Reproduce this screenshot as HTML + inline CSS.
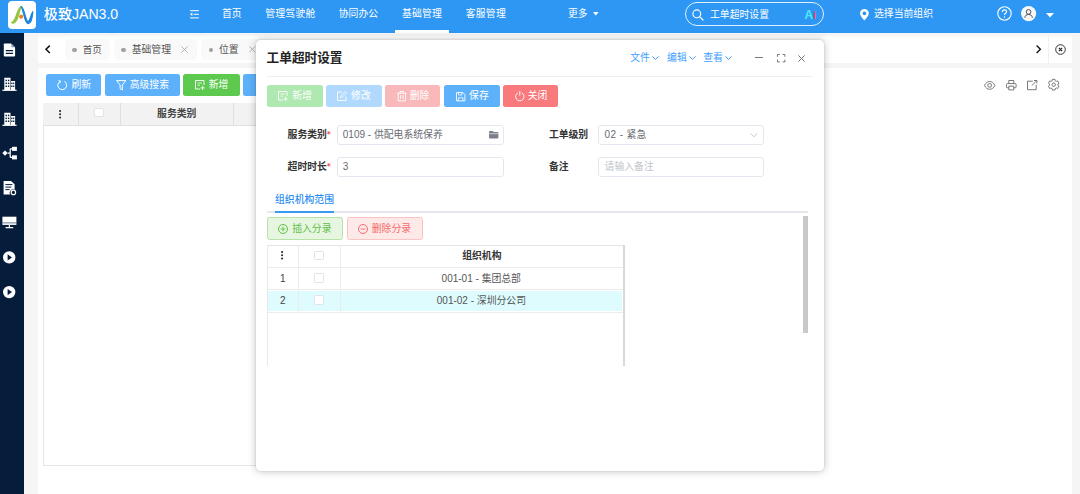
<!DOCTYPE html>
<html lang="zh-CN">
<head>
<meta charset="utf-8">
<title>极致JAN3.0 - 工单超时设置</title>
<style>
html,body{margin:0;padding:0;}
body{width:1080px;height:494px;overflow:hidden;position:relative;background:#f5f5f5;
 font-family:"Liberation Sans","Noto Sans CJK SC",sans-serif;font-size:9.84px;color:#303133;}
.a{position:absolute;}
.t{position:absolute;white-space:nowrap;line-height:14px;height:14px;margin-top:-7px;}
.b{font-weight:bold;}
svg{position:absolute;overflow:visible;}
/* header */
#hdr{left:0;top:0;width:1080px;height:32.6px;background:#2e97f4;}
#hdr .t{color:#fff;}
#side{left:0;top:32.6px;width:24.4px;height:462px;background:#051d3a;}
#tabs{left:37.6px;top:36px;width:1034.6px;height:27px;background:#fff;}
#main{left:37.6px;top:68px;width:1034.6px;height:426px;background:#fff;}
.chip{position:absolute;top:39.4px;height:20.8px;background:#f9f9f9;border-radius:5px;}
.dot{position:absolute;width:4.400px;height:4.400px;border-radius:50%;background:#a0a0a0;top:47.500px;}
.btn{position:absolute;height:22px;border-radius:2.5px;color:#fff;}
.btn .t{color:#fff;top:11px;}
.btn svg{top:5.5px;}
/* modal */
#modal{left:255.5px;top:39.5px;width:568.5px;height:431.5px;background:#fff;border-radius:4.5px;
 box-shadow:0 0 8px rgba(0,0,0,.26),0 0 1.500px rgba(0,0,0,.18);}
.inp{position:absolute;height:17.7px;border:1px solid #e3e7ef;border-radius:3px;background:#fff;}
.cb{position:absolute;width:7.9px;height:7.9px;border:0.8px solid #e0e3e8;border-radius:1.5px;background:#fff;}
</style>
</head>
<body>
<!-- HEADER -->
<div id="hdr" class="a">
  <div class="a" style="left:8.3px;top:.9px;width:28px;height:27.9px;background:#fff;border-radius:4px;"></div>
  <svg style="left:8.3px;top:0.9px" width="28" height="28" viewBox="0 0 28 28">
    <path d="M2.9 21.3C7.6 20.6 8.2 8.2 12.6 5.1L13.9 5.9C10.9 10.5 11.2 21.4 5.2 22.7C4.2 22.9 3.3 22.3 2.9 21.3Z" fill="#8fc63d"/>
    <path d="M13.2 5.5C16.8 7 17.4 20.6 20.2 20.4C22.2 20.1 22.4 14 24.9 10.6C24.6 14.6 23.2 22.4 20.3 22.6C16.4 22.8 15.8 10.4 13.2 5.5Z" fill="#1b83e0" stroke="#1b83e0" stroke-width="1.100" stroke-linejoin="round"/>
    <circle cx="13.1" cy="15.7" r="2.1" fill="#f5821f"/>
  </svg>
  <div class="t b" style="left:43.8px;top:14.2px;font-size:14.1px;line-height:18px;height:18px;margin-top:-9px;font-weight:500;">极致JAN3.0</div>
  <svg style="left:190px;top:9.6px" width="9" height="8.6" viewBox="0 0 9 8.6"><path d="M0 .7H8.800M3.600 4.300H8.800M0 7.900H8.800" stroke="#fff" stroke-width="1" fill="none"/><path d="M0 4.300L2.400 2.600V6Z" fill="#fff"/></svg>
  <div class="t" style="left:221.9px;top:13.8px;">首页</div>
  <div class="t" style="left:265.3px;top:13.8px;letter-spacing:.2px">管理驾驶舱</div>
  <div class="t" style="left:338.8px;top:13.8px;">协同办公</div>
  <div class="t" style="left:402px;top:13.8px;letter-spacing:.2px">基础管理</div>
  <div class="a" style="left:395.3px;top:30.1px;width:53.5px;height:2.5px;background:#fff;"></div>
  <div class="t" style="left:465.8px;top:13.8px;letter-spacing:.2px">客服管理</div>
  <div class="t" style="left:568px;top:13.8px;">更多</div>
  <svg style="left:592.6px;top:12.100px" width="5.6" height="3.4" viewBox="0 0 5.6 3.4"><path d="M0 0H5.6L2.8 3.4Z" fill="#fff"/></svg>
  <!-- search pill -->
  <div class="a" style="left:685px;top:2.300px;width:136.5px;height:21.500px;border:1px solid #e3f1fe;border-radius:12px;"></div>
  <svg style="left:692px;top:8.6px" width="11.5" height="11.5" viewBox="0 0 11.5 11.5"><circle cx="4.8" cy="4.8" r="3.9" fill="none" stroke="#fff" stroke-width="1.1"/><path d="M7.6 7.6L11 11" stroke="#fff" stroke-width="1.2" stroke-linecap="round"/></svg>
  <div class="t" style="left:710px;top:14.6px;">工单超时设置</div>
  <div class="t b" style="left:804.4px;top:15px;font-size:12px;color:#45ecff;">A<span style="color:#e8475d;font-size:11px">i</span></div>
  <!-- location -->
  <svg style="left:860px;top:8.8px" width="8.8" height="11.4" viewBox="0 0 8.8 11.4"><path d="M4.4 0C2 0 0 1.9 0 4.3C0 7.2 4.4 11.4 4.4 11.4C4.4 11.4 8.8 7.2 8.8 4.3C8.8 1.9 6.8 0 4.4 0ZM4.4 6.2A1.9 1.9 0 1 1 4.4 2.4A1.9 1.9 0 0 1 4.4 6.2Z" fill="#fff"/></svg>
  <div class="t" style="left:874px;top:13.8px;">选择当前组织</div>
  <!-- help -->
  <svg style="left:997px;top:6px" width="15" height="15" viewBox="0 0 15 15"><circle cx="7.5" cy="7.5" r="6.7" fill="none" stroke="#fff" stroke-width="1.1"/><path d="M5.4 5.9C5.4 4.6 6.3 3.9 7.5 3.9C8.7 3.9 9.6 4.7 9.6 5.8C9.6 7.3 7.5 7.3 7.5 9" fill="none" stroke="#fff" stroke-width="1.1"/><circle cx="7.5" cy="10.9" r=".75" fill="#fff"/></svg>
  <!-- user -->
  <svg style="left:1021px;top:6.400px" width="15.2" height="15.2" viewBox="0 0 15.2 15.2"><circle cx="7.6" cy="7.6" r="7.6" fill="#f7f7f7"/><circle cx="7.6" cy="5.9" r="2.3" fill="none" stroke="#505050" stroke-width="1"/><path d="M3.9 11.8C3.9 9.6 5.4 8.5 7.6 8.5C9.8 8.5 11.3 9.6 11.3 11.8" fill="none" stroke="#505050" stroke-width="1"/></svg>
  <svg style="left:1046px;top:12.5px" width="8" height="4.6" viewBox="0 0 8 4.6"><path d="M0 0H8L4 4.6Z" fill="#fff"/></svg>
</div>

<!-- SIDEBAR -->
<div id="side" class="a"></div>
<svg id="sideicons" style="left:0;top:0" width="25" height="494" viewBox="0 0 25 494" fill="#fff">
  <!-- file -->
  <path d="M4.6 43.5H11L15.1 47.4V55.6A.8 .8 0 0 1 14.300 56.400H4.600A.8 .8 0 0 1 3.800 55.600V44.300A.8 .8 0 0 1 4.600 43.500Z"/>
  <path d="M11.300 43.500V47.200H15.100Z" fill="#8fa3ba"/>
  <path d="M5.800 50.700H13.100M5.800 53.300H13.100" stroke="#051d3a" stroke-width="1.200"/>
  <!-- building -->
  <g><path d="M4.300 77.800H10.500V80.900H15.100V90H4.300Z"/><path d="M2.400 90.300H16.600" stroke="#fff" stroke-width="1.200"/>
  <g fill="#051d3a"><rect x="5.500" y="79.700" width="1.400" height="1.500"/><rect x="7.900" y="79.700" width="1.400" height="1.500"/><rect x="5.500" y="82.600" width="1.400" height="1.500"/><rect x="7.900" y="82.600" width="1.400" height="1.500"/><rect x="5.500" y="85.500" width="1.400" height="1.500"/><rect x="7.900" y="85.500" width="1.400" height="1.500"/><rect x="11.200" y="82.600" width="1.300" height="1.500"/><rect x="13.100" y="82.600" width="1.200" height="1.500"/><rect x="11.200" y="85.500" width="1.300" height="1.500"/><rect x="13.100" y="85.500" width="1.200" height="1.500"/><rect x="10.300" y="80.900" width=".5" height="9"/></g></g>
  <g transform="translate(0,35)"><path d="M4.300 77.800H10.500V80.900H15.100V90H4.300Z"/><path d="M2.400 90.300H16.600" stroke="#fff" stroke-width="1.200"/>
  <g fill="#051d3a"><rect x="5.500" y="79.700" width="1.400" height="1.500"/><rect x="7.900" y="79.700" width="1.400" height="1.500"/><rect x="5.500" y="82.600" width="1.400" height="1.500"/><rect x="7.900" y="82.600" width="1.400" height="1.500"/><rect x="5.500" y="85.500" width="1.400" height="1.500"/><rect x="7.900" y="85.500" width="1.400" height="1.500"/><rect x="11.200" y="82.600" width="1.300" height="1.500"/><rect x="13.100" y="82.600" width="1.200" height="1.500"/><rect x="11.200" y="85.500" width="1.300" height="1.500"/><rect x="13.100" y="85.500" width="1.200" height="1.500"/><rect x="10.300" y="80.900" width=".5" height="9"/></g></g>
  <!-- org -->
  <path d="M2.300 153.100L5 150.400L7.700 153.100L5 155.800Z"/>
  <path d="M7.600 153.100H10.200M10.200 148.800V157.400M10.200 148.800H12.400M10.200 157.400H12.400" stroke="#fff" stroke-width="1.200" fill="none"/>
  <rect x="12" y="146.800" width="4.900" height="4.100"/><rect x="12" y="155.300" width="4.900" height="4.100"/>
  <!-- doc with gear -->
  <path d="M3.600 180.900H11L14.600 184.200V189.600A3.400 3.400 0 0 0 10.300 194.600H3.600Z"/>
  <path d="M5.400 184.600H12.400M5.400 187.100H11.400M5.400 189.600H9.600" stroke="#051d3a" stroke-width="1" />
  <circle cx="13.400" cy="192.400" r="2.200" fill="none" stroke="#fff" stroke-width="1.200"/>
  <!-- monitor -->
  <rect x="2.400" y="216.700" width="14" height="8.200"/>
  <path d="M9.400 224.900V227.400M5.600 227.700H13.200" stroke="#fff" stroke-width="1.200"/>
  <path d="M2.400 222.900H16.400" stroke="#051d3a" stroke-width=".6"/>
  <!-- play -->
  <circle cx="9.200" cy="257.400" r="6.200"/><path d="M7.600 254.300L12 257.400L7.600 260.500Z" fill="#051d3a"/>
  <circle cx="9.200" cy="292.100" r="6.200"/><path d="M7.600 289L12 292.100L7.600 295.200Z" fill="#051d3a"/>
</svg>

<!-- TAB BAR -->
<div id="tabs" class="a"></div>
<svg style="left:44.8px;top:45.4px" width="5.4" height="8.6" viewBox="0 0 5.4 8.6"><path d="M4.8 .6L1 4.3L4.8 8" fill="none" stroke="#111" stroke-width="1.5"/></svg>
<div class="chip" style="left:64.5px;width:45.5px;"></div>
<div class="dot" style="left:72.300px;"></div>
<div class="t" style="left:82.8px;top:49.8px;color:#555;font-size:9.5px">首页</div>
<div class="chip" style="left:113.7px;width:83.8px;"></div>
<div class="dot" style="left:121.300px;"></div>
<div class="t" style="left:131.7px;top:49.8px;color:#555;">基础管理</div>
<svg style="left:181.2px;top:46.3px" width="7" height="7" viewBox="0 0 7 7"><path d="M.4 .4L6.6 6.6M6.6 .4L.4 6.6" stroke="#aaa" stroke-width=".9"/></svg>
<div class="chip" style="left:201.3px;width:70px;"></div>
<div class="dot" style="left:208.800px;"></div>
<div class="t" style="left:219px;top:49.8px;color:#555;">位置</div>
<svg style="left:249px;top:46.400px" width="6.600" height="6.600" viewBox="0 0 7 7"><path d="M.4 .4L6.6 6.6M6.6 .4L.4 6.6" stroke="#aaa" stroke-width=".9"/></svg>
<svg style="left:1035.600px;top:45.200px" width="5.400" height="8.600" viewBox="0 0 5.400 8.600"><path d="M.6 .6L4.400 4.300L.6 8" fill="none" stroke="#111" stroke-width="1.350"/></svg>
<div class="a" style="left:1047.8px;top:35px;width:.8px;height:27.7px;background:#f0f0f0"></div>
<svg style="left:1055px;top:44px" width="11" height="11" viewBox="0 0 11 11"><circle cx="5.500" cy="5.500" r="4.800" fill="none" stroke="#333" stroke-width="1"/><path d="M3.900 3.900L7.100 7.100M7.100 3.900L3.900 7.100" stroke="#222" stroke-width="1.200"/></svg>

<!-- MAIN -->
<div id="main" class="a"></div>
<div class="btn" style="left:45.9px;top:74px;width:55.5px;background:#5db1fb;">
  <svg style="left:11.600px;top:5.800px" width="10.400" height="10.400" viewBox="0 0 10.400 10.400"><path d="M3.300 1.300A4.400 4.400 0 1 0 7.400 1.400" fill="none" stroke="#fff" stroke-width="1"/><path d="M1.500 .5L3.700 1.200L2.600 3.200" fill="none" stroke="#fff" stroke-width=".9"/></svg>
  <div class="t" style="left:25.6px;">刷新</div>
</div>
<div class="btn" style="left:104.9px;top:74px;width:75.3px;background:#5db1fb;">
  <svg style="left:11.400px;top:5.800px" width="10.400" height="10.600" viewBox="0 0 10.400 10.600"><path d="M.6 .6H9.800L6.300 5V10L4.100 8.600V5Z" fill="none" stroke="#fff" stroke-width="1" stroke-linejoin="round"/></svg>
  <div class="t" style="left:24.8px;">高级搜索</div>
</div>
<div class="btn" style="left:183.2px;top:74px;width:56.4px;background:#5dc94f;">
  <svg style="left:11.4px;top:6.2px" width="10" height="10" viewBox="0 0 10 10"><path d="M5 9H.5V.5H9V5" fill="none" stroke="#fff" stroke-width=".9"/><path d="M2.4 3H7M2.4 5.2H5" stroke="#fff" stroke-width=".8"/><path d="M7.6 5.8V10M5.5 7.9H9.7" stroke="#fff" stroke-width=".9"/></svg>
  <div class="t" style="left:25.6px;">新增</div>
</div>
<div class="btn" style="left:242.9px;top:74px;width:56px;background:#5db1fb;"></div>
<!-- right icons -->
<svg style="left:984.200px;top:80.500px" width="11.400" height="8.800" viewBox="0 0 11.400 8.800"><path d="M.5 4.400C1.700 1.800 3.600 .5 5.700 .5C7.800 .5 9.700 1.800 10.900 4.400C9.700 7 7.800 8.300 5.700 8.300C3.600 8.300 1.700 7 .5 4.400Z" fill="none" stroke="#6a6a6a" stroke-width=".9"/><circle cx="5.700" cy="4.400" r="1.900" fill="none" stroke="#6a6a6a" stroke-width=".9"/></svg>
<svg style="left:1005.700px;top:79.700px" width="10.600" height="10.400" viewBox="0 0 10.600 10.400"><path d="M2.800 3.600V.5H7.800V3.600M2.800 7.800H1.300C.8 7.800 .5 7.500 .5 7V4.400C.5 3.900 .8 3.600 1.300 3.600H9.300C9.800 3.600 10.100 3.900 10.100 4.400V7C10.100 7.500 9.800 7.800 9.300 7.800H7.800M2.800 6.200H7.800V9.900H2.800Z" fill="none" stroke="#6a6a6a" stroke-width=".9"/></svg>
<svg style="left:1027.200px;top:79.800px" width="10.400" height="10.200" viewBox="0 0 10.400 10.200"><path d="M5.800 1.200H.5V9.700H9.200V4.800" fill="none" stroke="#6a6a6a" stroke-width=".9"/><path d="M4.800 5.600L9.600 .8M7 .5H9.900V3.400" fill="none" stroke="#6a6a6a" stroke-width=".9"/></svg>
<svg style="left:1047.600px;top:79.100px" width="11.400" height="11.400" viewBox="0 0 11.400 11.400"><path d="M4.23 1.66L4.37 0.36L7.03 0.36L7.17 1.66L8.46 2.41L9.66 1.88L10.99 4.18L9.93 4.95L9.93 6.45L10.99 7.22L9.66 9.52L8.46 8.99L7.17 9.74L7.03 11.04L4.37 11.04L4.23 9.74L2.94 8.99L1.74 9.52L0.41 7.22L1.47 6.45L1.47 4.95L0.41 4.18L1.74 1.88L2.94 2.41Z" fill="none" stroke="#6a6a6a" stroke-width=".9" stroke-linejoin="round"/><circle cx="5.700" cy="5.700" r="1.700" fill="none" stroke="#6a6a6a" stroke-width=".9"/></svg>

<!-- grid -->
<div class="a" style="left:43.2px;top:103.2px;width:560px;height:362.600px;border:.8px solid #e6e6e6;box-sizing:border-box;background:#fff;"></div>
<div class="a" style="left:43.2px;top:103.2px;width:560px;height:22.400px;background:#f2f2f2;border-bottom:.8px solid #e2e2e2;box-sizing:border-box"></div>
<div class="a" style="left:78px;top:103.2px;width:.8px;height:22px;background:#e0e0e0"></div>
<div class="a" style="left:120.3px;top:103.2px;width:.8px;height:22px;background:#e0e0e0"></div>
<div class="a" style="left:232.7px;top:103.2px;width:.8px;height:22px;background:#e0e0e0"></div>
<svg style="left:59px;top:109.600px" width="2.200" height="8.600" viewBox="0 0 2.200 8.600" fill="#2a2a2a"><circle cx="1.100" cy="1.100" r="1.050"/><circle cx="1.100" cy="4.300" r="1.050"/><circle cx="1.100" cy="7.500" r="1.050"/></svg>
<div class="cb" style="left:94.200px;top:107.800px;width:7.600px;height:7.600px;border-radius:2px"></div>
<div class="t b" style="left:157.1px;top:114px;color:#444;">服务类别</div>

<!-- MODAL -->
<div id="modal" class="a"></div>
<div class="t b" style="left:266.6px;top:57.8px;font-size:12.66px;color:#222;line-height:18px;height:18px;margin-top:-9px">工单超时设置</div>
<div class="t" style="left:630.2px;top:57.8px;color:#409eff;">文件</div>
<svg style="left:652.1999999999999px;top:56.100px" width="7" height="4" viewBox="0 0 7 4"><path d="M.4 .4L3.500 3.400L6.600 .4" fill="none" stroke="#409eff" stroke-width="1"/></svg>
<div class="t" style="left:667.1px;top:57.8px;color:#409eff;">编辑</div>
<svg style="left:688.6px;top:56.100px" width="7" height="4" viewBox="0 0 7 4"><path d="M.4 .4L3.500 3.400L6.600 .4" fill="none" stroke="#409eff" stroke-width="1"/></svg>
<div class="t" style="left:703.3px;top:57.8px;color:#409eff;">查看</div>
<svg style="left:725.1999999999999px;top:56.100px" width="7" height="4" viewBox="0 0 7 4"><path d="M.4 .4L3.500 3.400L6.600 .4" fill="none" stroke="#409eff" stroke-width="1"/></svg>
<div class="a" style="left:755.3px;top:57.3px;width:8px;height:.9px;background:#777"></div>
<svg style="left:776.600px;top:53.500px" width="8.400" height="8.400" viewBox="0 0 8.400 8.400"><path d="M.5 2.800V.5H2.800M5.600 .5H7.900V2.800M7.900 5.600V7.900H5.600M2.800 7.900H.5V5.600" fill="none" stroke="#666" stroke-width=".9"/></svg>
<svg style="left:798px;top:54.700px" width="7" height="7" viewBox="0 0 7 7"><path d="M.4 .4L6.600 6.600M6.600 .4L.4 6.600" stroke="#666" stroke-width=".9"/></svg>
<div class="a" style="left:266.600px;top:75.700px;width:545.600px;height:.8px;background:#efefef"></div>

<!-- modal toolbar -->
<div class="btn" style="left:266.800px;top:85.300px;width:56.200px;background:#afe8b0;">
  <svg style="left:11.200px;top:6.200px" width="10" height="10" viewBox="0 0 10 10"><path d="M5 9H.5V.5H9V5" fill="none" stroke="#fff" stroke-width=".9"/><path d="M2.400 3H7M2.400 5.200H5" stroke="#fff" stroke-width=".8"/><path d="M7.600 5.800V10M5.500 7.900H9.700" stroke="#fff" stroke-width=".9"/></svg>
  <div class="t" style="left:25.400px;">新增</div>
</div>
<div class="btn" style="left:325.500px;top:85.300px;width:56px;background:#b1d9fd;">
  <svg style="left:11.600px;top:6.200px" width="10" height="10" viewBox="0 0 10 10"><path d="M9 5.500V9.500H.5V1H5" fill="none" stroke="#fff" stroke-width=".9"/><path d="M3.400 6.800L4 4.800L8.300 .5L9.600 1.800L5.300 6.100Z" fill="none" stroke="#fff" stroke-width=".8" stroke-linejoin="round"/></svg>
  <div class="t" style="left:25.600px;">修改</div>
</div>
<div class="btn" style="left:385px;top:85.300px;width:55.200px;background:#f9b9ba;">
  <svg style="left:11.600px;top:6px" width="9.600" height="10.400" viewBox="0 0 9.600 10.400"><path d="M0 2.200H9.600M3 2.200V.5H6.600V2.200M1.200 2.200V9.900H8.400V2.200M3.600 4.200V8M6 4.200V8" fill="none" stroke="#fff" stroke-width=".9"/></svg>
  <div class="t" style="left:24.800px;">删除</div>
</div>
<div class="btn" style="left:443.500px;top:85.300px;width:56px;background:#5db1fb;">
  <svg style="left:12px;top:6.400px" width="9.400" height="9.400" viewBox="0 0 9.400 9.400"><path d="M.5 .5H6.800L8.900 2.600V8.900H.5Z" fill="none" stroke="#fff" stroke-width=".9" stroke-linejoin="round"/><path d="M2.600 .5V3H6V.5M2.400 8.900V5.800H7V8.900" fill="none" stroke="#fff" stroke-width=".8"/></svg>
  <div class="t" style="left:25.600px;">保存</div>
</div>
<div class="btn" style="left:502.700px;top:85.300px;width:55.700px;background:#f97a7c;">
  <svg style="left:12px;top:6.200px" width="9.600" height="9.800" viewBox="0 0 9.600 9.800"><path d="M3 1.800A4.200 4.200 0 1 0 6.600 1.800" fill="none" stroke="#fff" stroke-width=".9"/><path d="M4.800 0V4.600" stroke="#fff" stroke-width=".9"/></svg>
  <div class="t" style="left:25px;">关闭</div>
</div>

<!-- form -->
<div class="t b" style="left:287.600px;top:134.800px;color:#333;">服务类别</div>
<svg style="left:327.4px;top:131px" width="3.600" height="3.600" viewBox="0 0 3.600 3.600"><path d="M1.800 0V3.600M.2 .9L3.400 2.700M3.400 .9L.2 2.700" stroke="#f5484a" stroke-width=".8"/></svg>
<div class="inp" style="left:337px;top:125px;width:164.500px;"></div>
<div class="t" style="left:342.800px;top:135px;color:#676b72;"><span style="font-size:10px">0109 - </span>供配电系统保养</div>
<svg style="left:489px;top:131px" width="9.400" height="7.400" viewBox="0 0 9.400 7.400"><path d="M0 .9C0 .4 .4 0 .9 0H3.600L4.600 1.100H8.500C9 1.100 9.400 1.500 9.400 2V6.500C9.400 7 9 7.400 8.500 7.400H.9C.4 7.400 0 7 0 6.500Z" fill="#7b8087"/><path d="M0 2.700H9.400" stroke="#fff" stroke-width=".6"/></svg>
<div class="t b" style="left:548.900px;top:134.800px;color:#333;">工单级别</div>
<div class="inp" style="left:598.300px;top:125px;width:164px;"></div>
<div class="t" style="left:604.600px;top:135.200px;color:#676b72;"><span style="font-size:10px;letter-spacing:.4px">02 - </span>紧急</div>
<svg style="left:749.600px;top:133px" width="7.600" height="4.400" viewBox="0 0 7.600 4.400"><path d="M.4 .4L3.800 3.800L7.200 .4" fill="none" stroke="#c0c4cc" stroke-width=".9"/></svg>

<div class="t b" style="left:287.600px;top:167px;color:#333;">超时时长</div>
<svg style="left:327.4px;top:163.2px" width="3.600" height="3.600" viewBox="0 0 3.600 3.600"><path d="M1.800 0V3.600M.2 .9L3.400 2.700M3.400 .9L.2 2.700" stroke="#f5484a" stroke-width=".8"/></svg>
<div class="inp" style="left:337px;top:157.200px;width:164.500px;"></div>
<div class="t" style="left:342.800px;top:167px;color:#676b72;font-size:10px">3</div>
<div class="t b" style="left:548.900px;top:167px;color:#333;">备注</div>
<div class="inp" style="left:598.300px;top:157.200px;width:164px;"></div>
<div class="t" style="left:604.600px;top:167px;color:#c0c4cc;">请输入备注</div>

<!-- sub tab -->
<div class="t" style="left:275px;top:199.600px;color:#2b8ff0;font-weight:500">组织机构范围</div>
<div class="a" style="left:266.800px;top:211.200px;width:541.200px;height:2.200px;background:#e5e8ed"></div>
<div class="a" style="left:275px;top:211.100px;width:59.300px;height:2.400px;background:#3a98f5"></div>
<div class="a" style="left:803px;top:215.500px;width:5px;height:117px;background:#c8c8c8"></div>

<div class="a" style="left:266.800px;top:217.300px;width:74.200px;height:20.800px;border:.8px solid #b7e3a8;border-radius:2.500px;background:#e6f6e0"></div>
<svg style="left:278px;top:223.600px" width="10" height="10" viewBox="0 0 10 10"><circle cx="5" cy="5" r="4.500" fill="none" stroke="#5fbf45" stroke-width="1"/><path d="M5 2.600V7.400M2.600 5H7.400" stroke="#5fbf45" stroke-width=".9"/></svg>
<div class="t" style="left:292.200px;top:228.600px;color:#5fbf45;">插入分录</div>
<div class="a" style="left:346.600px;top:217.300px;width:74.400px;height:20.800px;border:.8px solid #fbc4c4;border-radius:2.500px;background:#fee9e9"></div>
<svg style="left:358px;top:223.600px" width="10" height="10" viewBox="0 0 10 10"><circle cx="5" cy="5" r="4.500" fill="none" stroke="#f56c6c" stroke-width="1"/><path d="M2.600 5H7.400" stroke="#f56c6c" stroke-width=".9"/></svg>
<div class="t" style="left:371.800px;top:228.600px;color:#f56c6c;">删除分录</div>

<!-- inner table -->
<div class="a" style="left:267.600px;top:290.600px;width:354.600px;height:20.800px;background:#defcfe"></div>
<div class="a" style="left:266.800px;top:245px;width:357.200px;height:.8px;background:#e4e4e4"></div>
<div class="a" style="left:266.800px;top:267px;width:357.200px;height:.8px;background:#ececec"></div>
<div class="a" style="left:266.800px;top:289.400px;width:357.200px;height:.8px;background:#ececec"></div>
<div class="a" style="left:266.800px;top:311.600px;width:357.200px;height:.8px;background:#ececec"></div>
<div class="a" style="left:266.800px;top:245px;width:.8px;height:120.600px;background:#e9e9e9"></div>
<div class="a" style="left:623.200px;top:245px;width:1.400px;height:120.600px;background:#d9d9d9"></div>
<div class="a" style="left:298px;top:245px;width:.8px;height:67px;background:#ececec"></div>
<div class="a" style="left:340.100px;top:245px;width:.8px;height:67px;background:#ececec"></div>
<svg style="left:281px;top:251.400px" width="2.200" height="8.600" viewBox="0 0 2.200 8.600" fill="#2a2a2a"><circle cx="1.100" cy="1.100" r="1.050"/><circle cx="1.100" cy="4.300" r="1.050"/><circle cx="1.100" cy="7.500" r="1.050"/></svg>
<div class="cb" style="left:314.200px;top:250.600px;width:7.600px;height:7.600px"></div>
<div class="t b" style="left:462.200px;top:255.800px;color:#333;">组织机构</div>
<div class="t" style="left:279.900px;top:278.600px;color:#444;font-size:10px">1</div>
<div class="cb" style="left:314.200px;top:273px;width:7.600px;height:7.600px"></div>
<div class="t" style="left:441.600px;top:278.600px;color:#555;"><span style="font-size:10px">001-01 - </span>集团总部</div>
<div class="t" style="left:279.900px;top:300.500px;color:#444;font-size:10px">2</div>
<div class="cb" style="left:314.200px;top:295px;width:7.600px;height:7.600px"></div>
<div class="t" style="left:436.800px;top:300.500px;color:#555;"><span style="font-size:10px">001-02 - </span>深圳分公司</div>
</body>
</html>
